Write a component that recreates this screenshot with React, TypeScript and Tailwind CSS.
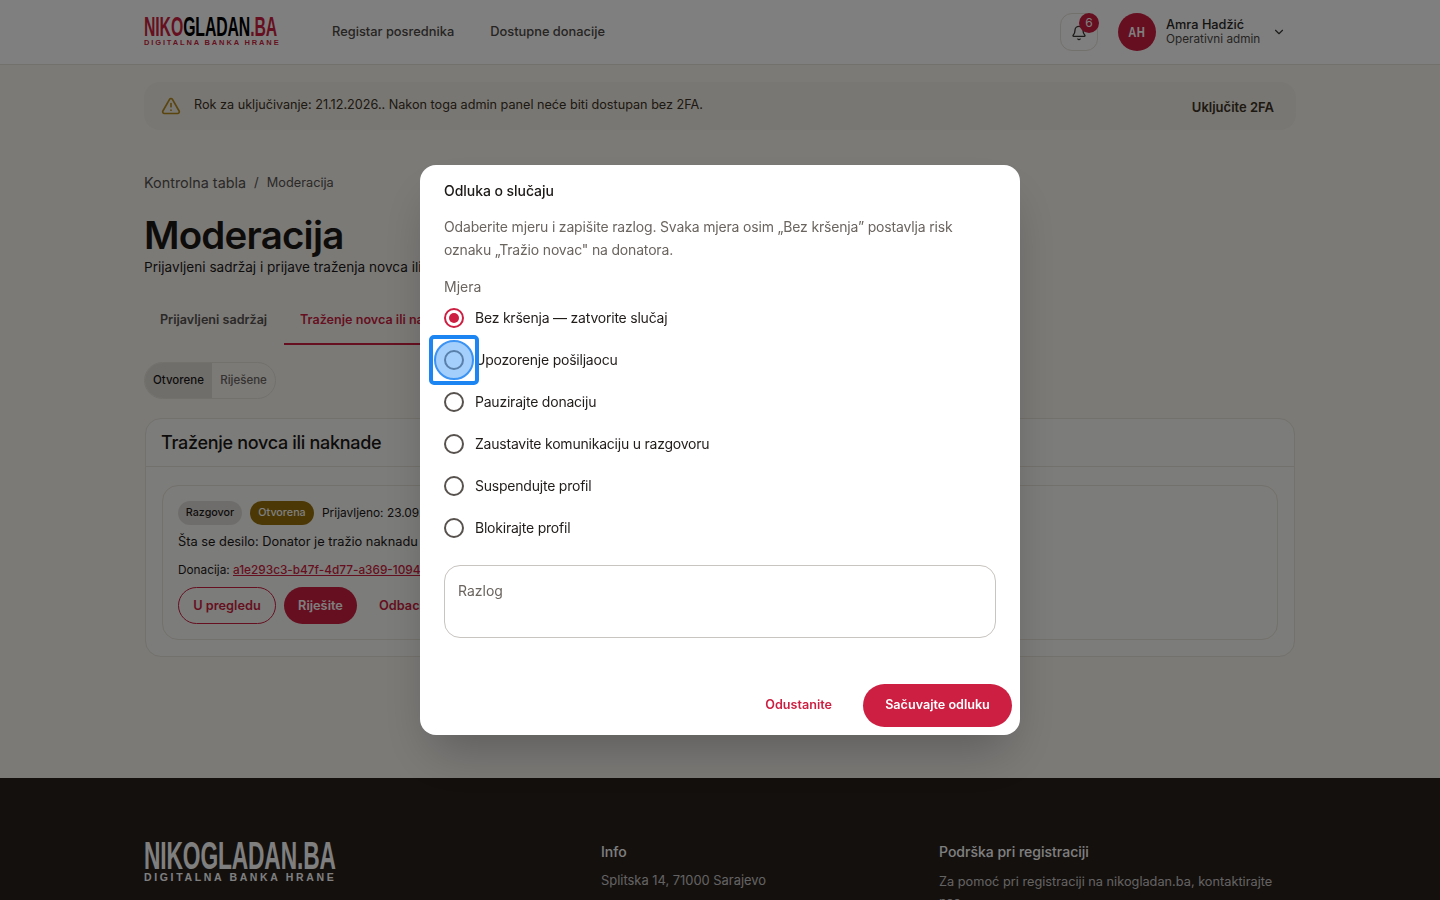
import { Bell, ChevronDown, TriangleAlert } from 'lucide-react'

const MEASURES = [
  'Bez kršenja — zatvorite slučaj',
  'Upozorenje pošiljaocu',
  'Pauzirajte donaciju',
  'Zaustavite komunikaciju u razgovoru',
  'Suspendujte profil',
  'Blokirajte profil',
]

function Logo({ dark }: { dark?: boolean }) {
  if (dark) {
    return (
      <div className="w-[193px] h-[42px] text-white font-['Liberation_Sans'] font-bold">
        <div className="w-[193px] origin-top-left scale-x-[0.583] whitespace-nowrap text-[39px] leading-[30px] tracking-[-0.2px]">NIKOGLADAN.BA</div>
        <div className="mt-[1px] whitespace-nowrap text-[10.5px] leading-[11px] tracking-[2.65px]">DIGITALNA BANKA HRANE</div>
      </div>
    )
  }
  return (
    <div className="w-[136px] h-[30px] font-['Liberation_Sans'] font-bold text-[#cc1f41]">
      <div className="w-[136px] origin-top-left scale-x-[0.585] whitespace-nowrap text-[27px] leading-[21px] tracking-[-0.15px]">
        NIKO<span className="text-black">GLADAN</span>.BA
      </div>
      <div className="mt-[1px] whitespace-nowrap text-[7.5px] leading-[8px] tracking-[1.85px]">DIGITALNA BANKA HRANE</div>
    </div>
  )
}

function Radio({ label, checked, focused }: { label: string; checked?: boolean; focused?: boolean }) {
  return (
    <label className="flex items-center h-[42px]">
      <span className="relative flex items-center justify-center w-5 h-5 mr-[11px]">
        <span className={`w-5 h-5 rounded-full border-2 flex items-center justify-center ${checked ? 'border-[#cc1f41]' : 'border-[#57524e]'}`}>
          {checked && <span className="w-[10px] h-[10px] rounded-full bg-[#cc1f41]" />}
        </span>
        {focused && (
          <span className="absolute -inset-[15px] w-[50px] h-[50px] rounded-[5px] border-[4px] border-[#1d85f2] flex items-center justify-center">
            <span className="w-[40px] h-[40px] rounded-full border-2 border-[#3b93f3] bg-[#5aa5f8]/55" />
          </span>
        )}
      </span>
      <span className="text-[14px] leading-[20px] text-[#211d1b] tracking-[-0.22px]">{label}</span>
    </label>
  )
}

export default function App() {
  return (
    <div className="relative h-screen overflow-hidden bg-[#f6f4ef] font-['Inter',sans-serif] text-[#1c1917]">
      <header className="h-[65px] bg-white border-b border-[#e7e2d8]">
        <div className="w-[1152px] mx-auto h-full flex items-center">
          <Logo />
          <nav className="ml-[52px] flex gap-9 text-[12.85px] font-medium text-[#4d4844]">
            <span>Registar posrednika</span>
            <span>Dostupne donacije</span>
          </nav>
          <div className="ml-auto mr-[10px] flex items-center">
            <div className="relative w-[38px] h-[38px] rounded-xl border border-[#e7e2d8] flex items-center justify-center">
              <Bell size={16} className="text-[#3c3835] mt-[1px]" />
              <span className="absolute -top-[1px] left-[18px] w-5 h-5 rounded-full bg-[#cc1f41] text-white text-[12px] flex items-center justify-center">6</span>
            </div>
            <div className="ml-5 w-[38px] h-[38px] rounded-full bg-[#cc1f41] text-white flex items-center justify-center font-['Liberation_Sans'] font-bold">
              <span className="text-[14px] scale-x-[0.8] tracking-[0.6px]">AH</span>
            </div>
            <div className="ml-[10px] w-[94px] whitespace-nowrap text-[12.75px] leading-[15px]">
              <div className="font-medium text-[#2b2725]">Amra Hadžić</div>
              <div className="text-[11.75px] text-[#4d4844]">Operativni admin</div>
            </div>
            <ChevronDown size={14} className="ml-[12px] text-[#3c3835]" />
          </div>
        </div>
      </header>

      <main className="h-[713px] w-[1152px] mx-auto pt-[17px]">
        <div className="h-[48px] rounded-2xl bg-[#f1eee6] flex items-center pl-[17px] pr-[22px]">
          <TriangleAlert size={20} className="text-[#b78a1c] mr-[13px]" />
          <span className="text-[12.65px] text-[#3c3225] -mt-[2px]">Rok za uključivanje: 21.12.2026.. Nakon toga admin panel neće biti dostupan bez 2FA.</span>
          <span className="ml-auto text-[13px] font-semibold text-[#3c3225] mt-[4px]">Uključite 2FA</span>
        </div>

        <div className="mt-[43px] flex items-center h-[20px] text-[#57524e]">
          <span className="text-[14.4px]">Kontrolna tabla</span>
          <span className="mx-[8px] text-[13px]">/</span>
          <span className="text-[12.75px]">Moderacija</span>
        </div>
        <h1 className="mt-[19px] text-[38.5px] leading-[46px] font-semibold tracking-[-0.8px] text-[#1c1917]">Moderacija</h1>
        <p className="text-[13.6px] leading-[18px] text-[#1c1917]">Prijavljeni sadržaj i prijave traženja novca ili naknade</p>

        <div className="mt-[19px] flex h-[50px] text-[12.6px] font-semibold">
          <span className="w-[140px] pl-4 flex items-center text-[#57524e]">Prijavljeni sadržaj</span>
          <span className="px-4 pt-[2px] flex items-center text-[#cc1f41] border-b-2 border-[#cc1f41]">Traženje novca ili naknade</span>
        </div>

        <div className="mt-[17px] flex w-[132px] h-[37px] rounded-full border border-[#e7e2d8] overflow-hidden text-[11.5px] font-medium">
          <span className="w-[67px] bg-[#e1ddd6] flex items-center justify-center text-[#1c1917]">Otvorene</span>
          <span className="flex-1 flex items-center justify-center text-[#6b6560]">Riješene</span>
        </div>

        <section className="mt-[19px] mx-px h-[239px] rounded-2xl border border-[#e7e2d8] bg-[#f9f8f5]">
          <h2 className="h-[48px] border-b border-[#e7e2d8] pl-[15px] flex items-center text-[18px] font-medium tracking-[-0.3px]">Traženje novca ili naknade</h2>
          <div className="mx-4 mt-[18px] h-[155px] rounded-2xl border border-[#e7e2d8] pl-[15px] pt-[15px]">
            <div className="flex items-center gap-2 text-[10.75px] font-medium">
              <span className="w-[64px] h-6 rounded-full bg-[#dedbd6] flex items-center justify-center">Razgovor</span>
              <span className="w-[64px] h-6 rounded-full bg-[#96700a] text-white flex items-center justify-center">Otvorena</span>
              <span className="text-[11.9px] font-normal">Prijavljeno: 23.09.2026.</span>
            </div>
            <p className="mt-[7px] text-[12.8px] leading-[20px]">Šta se desilo: Donator je tražio naknadu za donaciju</p>
            <p className="mt-[10px] text-[11.8px] leading-[16px]">Donacija: <span className="text-[#cc1f41] underline font-medium">a1e293c3-b47f-4d77-a369-1094</span></p>
            <div className="mt-[9px] flex gap-2 text-[12.75px] font-semibold">
              <span className="w-[98px] h-[37px] rounded-full border border-[#cc1f41] text-[#cc1f41] flex items-center justify-center">U pregledu</span>
              <span className="w-[73px] h-[37px] rounded-full bg-[#cc1f41] text-white flex items-center justify-center">Riješite</span>
              <span className="ml-[14px] flex items-center text-[#cc1f41]">Odbacite</span>
            </div>
          </div>
        </section>
      </main>

      <footer className="h-[200px] bg-[#28201c] text-white">
        <div className="w-[1152px] mx-auto pt-[63px] flex">
          <div className="w-[457px]"><Logo dark /></div>
          <div className="w-[338px]">
            <div className="text-[14px] font-medium leading-[22px]">Info</div>
            <div className="mt-[8px] text-[12.9px] leading-[20px] text-white/75">Splitska 14, 71000 Sarajevo</div>
          </div>
          <div className="w-[345px]">
            <div className="text-[14px] font-medium leading-[22px]">Podrška pri registraciji</div>
            <div className="mt-[9px] text-[12.75px] leading-[20px] text-white/75">Za pomoć pri registraciji na nikogladan.ba, kontaktirajte nas.</div>
          </div>
        </div>
      </footer>

      <div className="fixed inset-0 bg-black/50 flex items-center justify-center">
        <div className="w-[600px] h-[570px] rounded-2xl bg-white shadow-2xl flex flex-col">
          <div className="px-6 pt-[15px]">
            <h3 className="text-[14px] leading-[21px] font-medium tracking-[-0.05px] text-[#1c1917]">Odluka o slučaju</h3>
            <p className="mt-[14px] text-[14px] leading-[23px] text-[#6b6560] tracking-[-0.17px]">Odaberite mjeru i zapišite razlog. Svaka mjera osim „Bez kršenja” postavlja risk oznaku „Tražio novac" na donatora.</p>
            <div className="mt-[16px] text-[14px] leading-[20px] text-[#6b6560]">Mjera</div>
            <div>
              {MEASURES.map((m, i) => <Radio key={m} label={m} checked={i === 0} focused={i === 1} />)}
            </div>
            <div className="mt-[16px] h-[73px] rounded-2xl border border-[#c8c4bf] px-[13px] pt-[15px] text-[14px] leading-[20px] text-[#6b6560]">Razlog</div>
          </div>
          <div className="mt-auto flex items-center justify-end pr-2 pb-2 text-[12.6px] font-semibold">
            <span className="mr-[31px] text-[#cc1f41]">Odustanite</span>
            <span className="w-[149px] h-[43px] rounded-full bg-[#cc1f41] text-white flex items-center justify-center">Sačuvajte odluku</span>
          </div>
        </div>
      </div>
    </div>
  )
}
